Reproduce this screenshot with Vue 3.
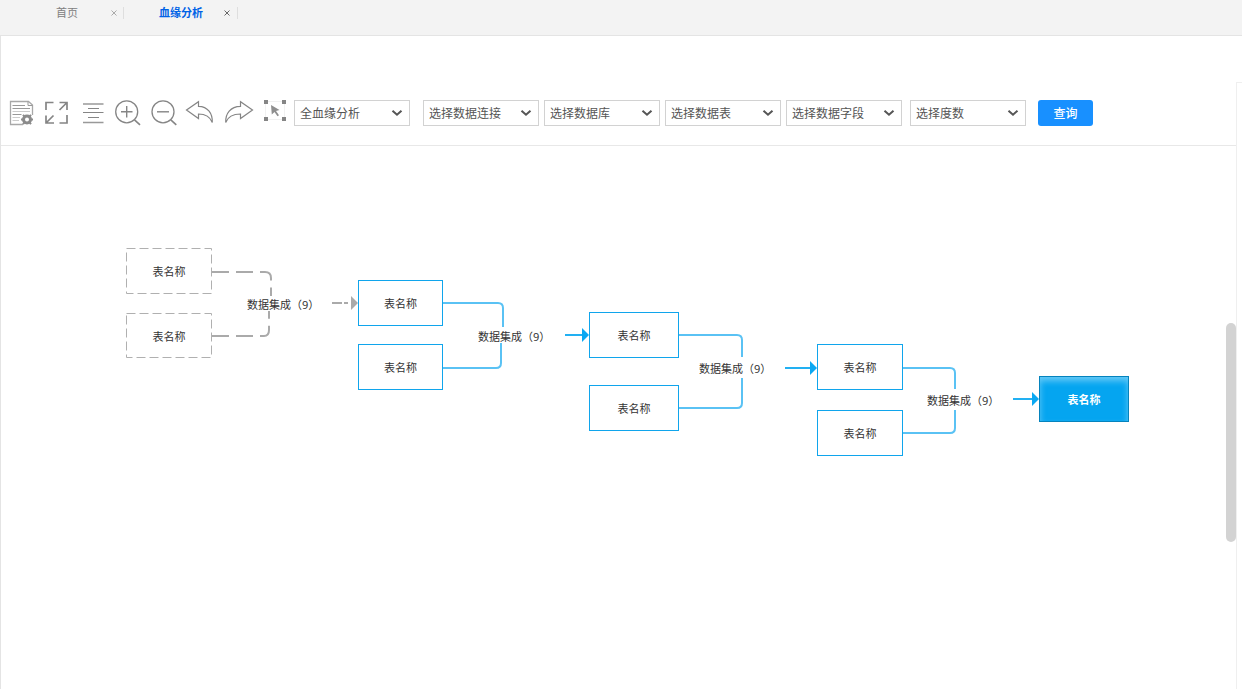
<script setup>
import { ref } from 'vue'

const tabs = [
  { name: '首页', active: false },
  { name: '血缘分析', active: true },
]

const filters = ref([
  { id: 'mode', label: '分析类型', value: '全血缘分析' },
  { id: 'connection', label: '数据连接', value: '选择数据连接' },
  { id: 'database', label: '数据库', value: '选择数据库' },
  { id: 'table', label: '数据表', value: '选择数据表' },
  { id: 'field', label: '数据字段', value: '选择数据字段' },
  { id: 'degree', label: '度数', value: '选择度数' },
])

const nodes = [
  { x: 125, y: 102, w: 86, h: 46, kind: 'dashed' },
  { x: 125, y: 167, w: 86, h: 45, kind: 'dashed' },
  { x: 357, y: 134, w: 85, h: 46, kind: 'plain' },
  { x: 357, y: 198, w: 85, h: 46, kind: 'plain' },
  { x: 588, y: 166, w: 90, h: 46, kind: 'plain' },
  { x: 588, y: 239, w: 90, h: 46, kind: 'plain' },
  { x: 816, y: 198, w: 86, h: 46, kind: 'plain' },
  { x: 816, y: 264, w: 86, h: 46, kind: 'plain' },
  { x: 1038, y: 230, w: 90, h: 46, kind: 'target' },
]

const labels = [
  { x: 246, y: 151 },
  { x: 477, y: 183 },
  { x: 698, y: 215 },
  { x: 926, y: 247 },
]

const links = [
  'M442 157H497Q502 157 502 162V181',
  'M442 222H495Q500 222 500 217V197',
  'M678 189H736Q741 189 741 194V211',
  'M678 262H736Q741 262 741 257V232',
  'M902 222H949Q954 222 954 227V243',
  'M902 287H949Q954 287 954 282V264',
]

const arrows = [
  { from: 564, to: 588, y: 189 },
  { from: 784, to: 816, y: 222 },
  { from: 1012, to: 1038, y: 253 },
]

const box = (n) => ({ left: n.x + 'px', top: n.y + 'px', width: n.w + 'px', height: n.h + 'px' })
const at = (l) => ({ left: l.x + 'px', top: l.y + 'px' })
</script>

<template>
  <div class="page">
    <header class="tabs">
      <div v-for="t in tabs" :key="t.name" class="tab" :class="{ active: t.active }">
        <a href="#" class="tab-name">{{ t.name }}</a>
        <button class="close" type="button" :aria-label="'关闭' + t.name">
          <svg width="8" height="8" viewBox="0 0 8 8"><path d="M1.500 1.500L6.500 6.500M6.500 1.500L1.500 6.500" /></svg>
        </button>
      </div>
    </header>

    <div class="body">
      <main class="workspace">
        <div class="toolbar">
          <div class="tools">
            <button class="tool" type="button" aria-label="报表设置">
              <svg viewBox="0 0 36 36">
                <path d="M29.500 20V10L25.500 6.500H7.500V29.500H20" stroke="#a8a8a8" stroke-width="1.300" />
                <path d="M25 6.500V10.500H29.500" stroke="#999" />
                <path d="M9.500 10.500H22M9.500 13.500H27M9.500 19.500H18.500" stroke="#999" />
                <path d="M9.500 16.500H27M9.500 22.500H17M9.500 25.500H16" stroke="#ccc" />
                <g stroke="#8b8b8b">
                  <circle cx="24" cy="24.500" r="3.500" stroke-width="3" />
                  <path d="M20 19.800L28 29.200M28 19.800L20 29.200M18 24.500H20.500M27.500 24.500H30" stroke-width="2" stroke-dasharray="2.500 7.400" />
                </g>
              </svg>
            </button>
            <button class="tool" type="button" aria-label="全屏">
              <svg viewBox="0 0 36 36">
                <path d="M7 15V7.500H14.500M28 20V28H20.500" stroke-width="1.700" />
                <path d="M20.500 7.500H28V15M28 7.500L20.500 15M7 20.500V28H15M7 28L14.500 20.500" stroke-width="1.700" />
              </svg>
            </button>
            <button class="tool" type="button" aria-label="居中对齐">
              <svg viewBox="0 0 36 36">
                <path d="M8 9H28.500M8 27.500H28.500" stroke="#999" stroke-width="1.500" />
                <path d="M13 13.500H24M8 17.500H28.500M13 22.500H24" />
              </svg>
            </button>
            <button class="tool" type="button" aria-label="放大">
              <svg viewBox="0 0 36 36">
                <circle cx="15.700" cy="16.800" r="11" stroke-width="1.300" />
                <path d="M10 16.800H21.500M15.700 11V22.500" stroke-width="1.400" />
                <path d="M23.500 24.800L29 29.800" stroke-width="1.600" />
              </svg>
            </button>
            <button class="tool" type="button" aria-label="缩小">
              <svg viewBox="0 0 36 36">
                <circle cx="16" cy="16.800" r="11" stroke-width="1.300" />
                <path d="M10 16.800H22" stroke-width="1.400" />
                <path d="M23.800 24.800L29.300 29.800" stroke-width="1.600" />
              </svg>
            </button>
            <button class="tool" type="button" aria-label="撤销">
              <svg viewBox="0 0 36 36">
                <path d="M3.500 15L15.500 6.700V11.300C25 11.500 29.700 18.500 29.300 27.500C27 21.500 22 19 15.500 19V23.500Z" stroke-width="1.200" />
              </svg>
            </button>
            <button class="tool" type="button" aria-label="重做">
              <svg viewBox="0 0 36 36">
                <path d="M33.500 15L21.500 6.700V11.300C11.500 11.500 6.300 18.500 6.700 27.500C9 21.500 14 19 21.500 19V23.500Z" stroke-width="1.200" />
              </svg>
            </button>
            <button class="tool" type="button" aria-label="框选">
              <svg viewBox="0 0 36 36">
                <rect x="10.500" y="6.500" width="19" height="18" stroke="#e2e2e2" stroke-dasharray="1 1" />
                <path d="M9 5h4v4h-4zM27 5h4v4h-4zM9 22h4v4h-4zM27 22h4v4h-4z" fill="#858585" stroke="none" />
                <path d="M16 10L24.500 15L21 16L24 20.300L22.500 21.300L19.500 17L16.800 19.500Z" fill="#8f8f8f" stroke="none" />
              </svg>
            </button>
          </div>

          <form class="filters" @submit.prevent>
            <div v-for="f in filters" :key="f.id" class="filter" :class="f.id">
              <select :id="f.id" v-model="f.value" :aria-label="f.label">
                <option>{{ f.value }}</option>
              </select>
              <svg class="chevron" width="12" height="8" viewBox="0 0 12 8"><path d="M1.500 1.700L6 5.700L10.500 1.700" /></svg>
            </div>
            <button class="query" type="submit">查询</button>
          </form>
        </div>

        <section class="canvas" aria-label="血缘关系图">
          <svg class="links" width="1140" height="320" viewBox="0 0 1140 320">
            <g class="muted">
              <path d="M211 126H264Q270 126 270 132V150" stroke-dasharray="17 7" />
              <path d="M211 190H263Q268 190 268 184V165" stroke-dasharray="17 7" />
              <path d="M331 157H341M343 157H347" />
              <path class="head" d="M350 150L357 157L350 164Z" />
            </g>
            <path v-for="d in links" :key="d" class="link" :d="d" />
            <g v-for="a in arrows" :key="a.from" class="arrow">
              <path :d="`M${a.from} ${a.y}H${a.to - 6}`" />
              <path class="head" :d="`M${a.to - 7} ${a.y - 7}L${a.to} ${a.y}L${a.to - 7} ${a.y + 7}Z`" />
            </g>
          </svg>
          <div v-for="(n, i) in nodes" :key="i" class="node" :class="n.kind" :style="box(n)">
            <svg v-if="n.kind === 'dashed'" class="outline" :viewBox="`0 0 ${n.w} ${n.h}`">
              <rect x="0.500" y="0.500" :width="n.w - 1" :height="n.h - 1" />
            </svg>
            <span>表名称</span>
          </div>
          <span v-for="l in labels" :key="l.x" class="link-label" :style="at(l)">数据集成（9）</span>
          <div class="thumb"></div>
        </section>
      </main>
      <div class="gutter"></div>
    </div>
  </div>
</template>

<style>
body {
  margin: 0;
  background: #fff;
}
</style>

<style scoped>
.page {
  display: flex;
  flex-direction: column;
  min-height: 100vh;
  font-family: "Noto Sans", "Noto Sans CJK SC", sans-serif;
  font-size: 11px;
  color: #333;
}
button,
select {
  font-family: inherit;
  margin: 0;
}
.tabs {
  display: flex;
  height: 35px;
  background: #f3f3f3;
  border-bottom: 1px solid #e4e4e4;
}
.tab {
  display: flex;
  align-items: center;
  justify-content: space-between;
  box-sizing: border-box;
  width: 114px;
  height: 12px;
  margin-top: 7px;
  padding: 0 6px 0 35px;
  border-right: 1px solid #dedede;
}
.tab:first-child {
  width: 124px;
  padding: 0 5px 0 56px;
}
.tab-name {
  color: #808080;
  line-height: 12px;
  text-decoration: none;
}
.active .tab-name {
  color: #0062e6;
  font-weight: 700;
}
.close {
  display: flex;
  padding: 0;
  border: 0;
  background: none;
}
.close path {
  stroke: #aaa;
  fill: none;
}
.active .close path {
  stroke: #666;
}
.body {
  display: flex;
  flex: 1;
  padding-top: 46px;
  border-left: 1px solid #e4e4e4;
}
.workspace {
  display: flex;
  flex: 1;
  flex-direction: column;
  min-width: 0;
  padding-top: 1px;
}
.gutter {
  width: 5px;
  border-top: 1px solid #efefef;
  border-left: 1px solid #efefef;
}
.toolbar {
  display: flex;
  align-items: center;
  padding: 12px 0 14px 2px;
  border-bottom: 1px solid #e8e8e8;
}
.tools {
  display: flex;
}
.tool {
  width: 36px;
  height: 36px;
  padding: 0;
  border: 0;
  background: none;
}
.tool svg {
  display: block;
  width: 36px;
  height: 36px;
  fill: none;
  stroke: #858585;
}
.filters {
  display: flex;
  gap: 5px;
  margin-left: 3px;
}
.filter {
  position: relative;
  width: 116px;
}
.filter.mode {
  margin-right: 8px;
}
.filter.degree {
  margin-left: 3px;
}
.filter select {
  display: block;
  box-sizing: border-box;
  width: 100%;
  height: 26px;
  padding: 0 20px 0 5px;
  border: 1px solid #d2d2d2;
  border-radius: 0;
  background: #fff;
  color: #555;
  font-size: 12px;
  appearance: none;
}
.chevron {
  position: absolute;
  top: 9px;
  right: 7px;
  fill: none;
  stroke: #555;
  stroke-width: 2;
  pointer-events: none;
}
.query {
  width: 55px;
  height: 26px;
  margin-left: 7px;
  padding: 0;
  border: 0;
  border-radius: 3px;
  background: #1890ff;
  color: #fff;
  font-size: 12px;
  font-weight: 500;
}
.canvas {
  position: relative;
  flex: 1;
  min-height: 400px;
}
.links {
  position: absolute;
  top: 0;
  left: 0;
  fill: none;
  stroke-width: 2;
}
.muted {
  stroke: #aaa;
}
.muted .head {
  fill: #aaa;
  stroke: none;
}
.link {
  stroke: #5ac2f4;
}
.arrow {
  stroke: #22b0f2;
}
.arrow .head {
  fill: #0ba8f2;
  stroke: none;
}
.node {
  position: absolute;
  display: flex;
  align-items: center;
  justify-content: center;
  box-sizing: border-box;
  border: 1px solid #10a5ec;
  background: #fff;
}
.node.dashed {
  border: 0;
}
.outline {
  position: absolute;
  top: 0;
  left: 0;
  width: 100%;
  height: 100%;
  fill: none;
  stroke: #b0b0b0;
  stroke-dasharray: 9 4;
}
.node.target {
  border-color: #0583bd;
  background: #05a5f0;
  box-shadow: inset 0 4px 6px #66c9f6;
  color: #fff;
  font-weight: 700;
}
.link-label {
  position: absolute;
  line-height: 16px;
  white-space: nowrap;
}
.thumb {
  position: absolute;
  top: 177px;
  right: 0;
  width: 10px;
  height: 219px;
  border-radius: 5px;
  background: #d3d3d3;
}
</style>
